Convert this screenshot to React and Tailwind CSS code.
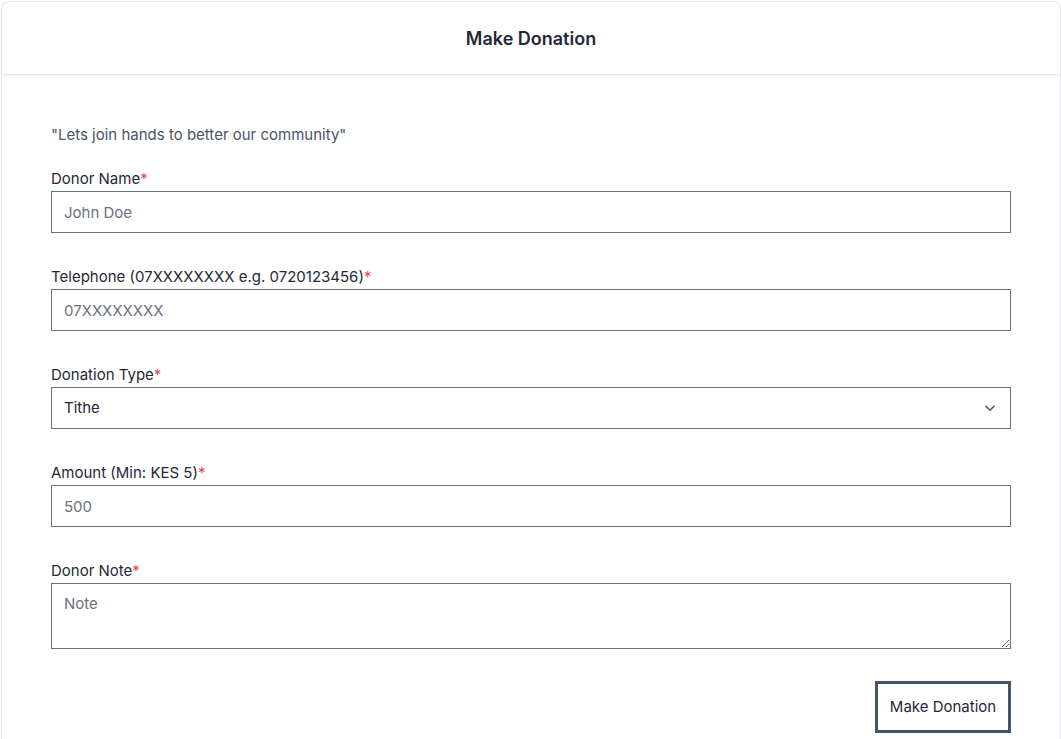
import React from "react";

function Label({ children }) {
  return (
    <label className="block text-[15px] leading-[22px] text-[#1f2937] mb-px">
      {children}
      <span className="text-[#ef4444]">*</span>
    </label>
  );
}

export default function App() {
  const font = { fontFamily: "Inter, 'Noto Sans', sans-serif" };
  return (
    <div className="min-h-screen bg-white pt-px pl-px" style={font}>
      <div className="rounded-t-lg border border-[#e5e7eb] bg-white">
        <div className="h-[73px] flex items-center justify-center border-b border-[#e5e7eb] shadow-[0_1px_2px_rgba(0,0,0,0.06)]">
          <h1 className="text-[18px] font-semibold text-[#1f2937]">Make Donation</h1>
        </div>
        <div className="px-[49px] pt-[49px] pb-[20px]">
          <p className="text-[15px] leading-[22px] text-[#4b5563] mb-[22px]">
            "Lets join hands to better our community"
          </p>

          <div className="mb-[33px]">
            <Label>Donor Name</Label>
            <input
              className="block w-full h-[42px] border border-[#64748b] px-3 text-[15px] text-[#1f2937] placeholder:text-[#6b7280] outline-none"
              placeholder="John Doe"
            />
          </div>

          <div className="mb-[33px]">
            <Label>Telephone (07XXXXXXXX e.g. 0720123456)</Label>
            <input
              className="block w-full h-[42px] border border-[#64748b] px-3 text-[15px] text-[#1f2937] placeholder:text-[#6b7280] outline-none"
              placeholder="07XXXXXXXX"
            />
          </div>

          <div className="mb-[33px]">
            <Label>Donation Type</Label>
            <div className="relative">
              <select className="block w-full h-[42px] appearance-none border border-[#64748b] bg-white px-3 text-[15px] text-[#1f2937] outline-none">
                <option>Tithe</option>
              </select>
              <svg
                className="pointer-events-none absolute right-[12px] top-1/2 -translate-y-1/2"
                width="18"
                height="18"
                viewBox="0 0 20 20"
                fill="none"
              >
                <path d="M5.5 8l4.5 4.5 4.5-4.5" stroke="#4b5563" strokeWidth="1.7" strokeLinecap="round" strokeLinejoin="round" />
              </svg>
            </div>
          </div>

          <div className="mb-[33px]">
            <Label>Amount (Min: KES 5)</Label>
            <input
              className="block w-full h-[42px] border border-[#64748b] px-3 text-[15px] text-[#1f2937] placeholder:text-[#6b7280] outline-none"
              placeholder="500"
            />
          </div>

          <div className="mb-[32px]">
            <Label>Donor Note</Label>
            <textarea
              className="block w-full h-[66px] border border-[#64748b] px-3 py-[9px] text-[15px] leading-[22px] text-[#1f2937] placeholder:text-[#6b7280] outline-none"
              placeholder="Note"
            />
          </div>

          <div className="flex justify-end">
            <button className="h-[52px] w-[136px] border-[3px] border-[#475569] bg-white text-[15px] text-[#1f2937]">
              Make Donation
            </button>
          </div>
        </div>
      </div>
    </div>
  );
}
